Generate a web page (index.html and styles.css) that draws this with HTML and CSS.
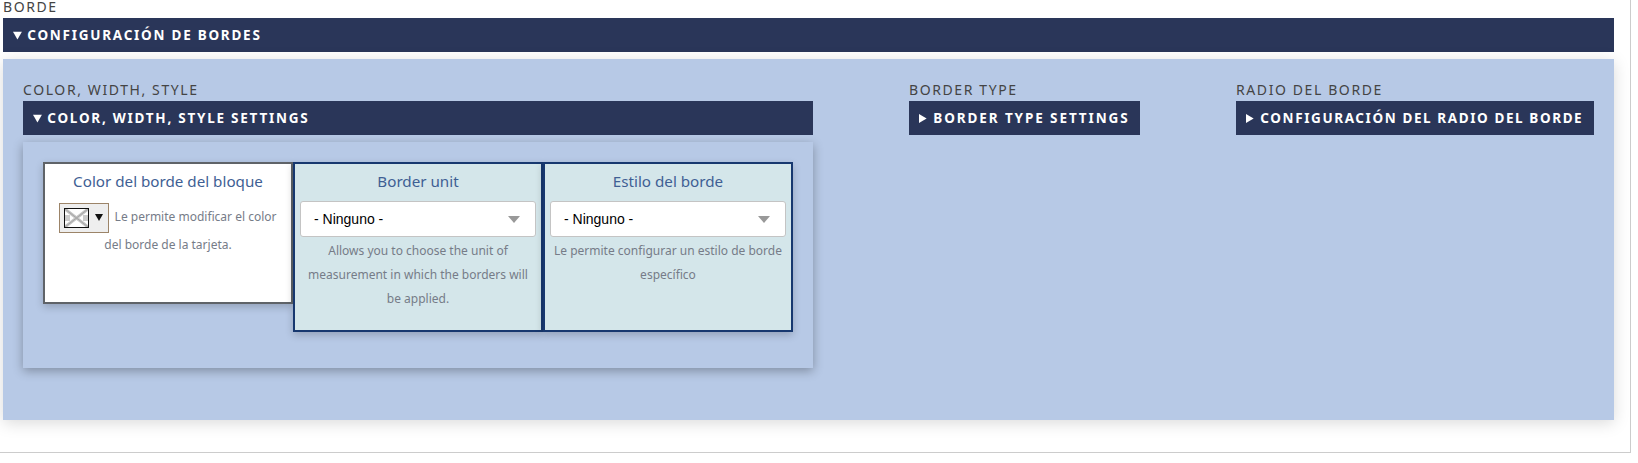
FILE: index.html
```html
<!DOCTYPE html>
<html lang="es">
<head>
    <meta charset="UTF-8">
    <meta name="viewport" content="width=device-width, initial-scale=1.0">
    <title>Borde</title>
    <link rel="stylesheet" href="styles.css">
</head>
<body>
    <div class="page-frame">
        <div class="field-label">Borde</div>
        <details class="group" open>
            <summary>Configuración de bordes</summary>
            <div class="group-panel">
                <div class="column column-color">
                    <div class="field-label">Color, width, style</div>
                    <details class="group" open>
                        <summary>Color, width, style settings</summary>
                        <div class="settings-panel">
                            <div class="card card-color">
                                <h4>Color del borde del bloque</h4>
                                <p>
                                    <span class="color-picker">
                                        <svg class="swatch" width="25" height="20" viewBox="0 0 25 20">
                                            <rect x="0" y="0" width="25" height="20" fill="#fff"/>
                                            <rect x="1" y="7" width="5" height="6" fill="#ccc"/>
                                            <rect x="19" y="7" width="5" height="6" fill="#ccc"/>
                                            <path d="M1 1L24 19M24 1L1 19" stroke="#c4c4c4" stroke-width="3"/>
                                            <path d="M1 1L24 19M24 1L1 19" stroke="#a6a6a6" stroke-width="1"/>
                                            <rect x="0.5" y="0.5" width="24" height="19" fill="none" stroke="#111"/>
                                        </svg>
                                        <span class="picker-arrow"></span>
                                    </span>
                                    Le permite modificar el color del borde de la tarjeta.
                                </p>
                            </div>
                            <div class="card">
                                <h4>Border unit</h4>
                                <div class="select-box">
                                    <select>
                                        <option>- Ninguno -</option>
                                    </select>
                                </div>
                                <p>Allows you to choose the unit of measurement in which the borders will be applied.</p>
                            </div>
                            <div class="card">
                                <h4>Estilo del borde</h4>
                                <div class="select-box">
                                    <select>
                                        <option>- Ninguno -</option>
                                    </select>
                                </div>
                                <p>Le permite configurar un estilo de borde específico</p>
                            </div>
                        </div>
                    </details>
                </div>
                <div class="column column-type">
                    <div class="field-label">Border type</div>
                    <details class="group">
                        <summary>Border type settings</summary>
                    </details>
                </div>
                <div class="column column-radius">
                    <div class="field-label">Radio del borde</div>
                    <details class="group">
                        <summary>Configuración del radio del borde</summary>
                    </details>
                </div>
            </div>
        </details>
    </div>
</body>
</html>
```
FILE: styles.css
```css
body {
    margin: 0;
    font-family: "Noto Sans", sans-serif;
    background-color: #fff;
}
.page-frame {
    box-sizing: border-box;
    width: 1631px;
    height: 453px;
    padding: 0 16px 0 3px;
    border-right: 1px solid #ccc;
    border-bottom: 1px solid #ccc;
}
.field-label {
    padding-bottom: 4px;
    font-size: 14px;
    line-height: 14px;
    letter-spacing: 1.6px;
    text-transform: uppercase;
    color: #444;
}
.group summary {
    box-sizing: border-box;
    height: 34px;
    padding-left: 10px;
    font-size: 13.5px;
    font-weight: 700;
    line-height: 34px;
    letter-spacing: 1.75px;
    text-transform: uppercase;
    color: #fff;
    background-color: #2a3659;
    cursor: pointer;
}
.group-panel {
    display: flex;
    margin-top: 7px;
    padding: 24px 20px 52px;
    background-color: #b7c9e6;
    box-shadow: 0 3px 15px rgba(0, 0, 0, 0.15);
}
.column-color {
    width: 790px;
}
.column-type {
    width: 231px;
    margin-left: 96px;
}
.column-type .group summary {
    letter-spacing: 1.9px;
}
.column-radius {
    width: 358px;
    margin-left: 96px;
}
.column-radius .group summary {
    letter-spacing: 1.6px;
}
.settings-panel {
    display: flex;
    align-items: stretch;
    margin-top: 7px;
    padding: 20px 20px 36px;
    background-color: #b7c9e6;
    box-shadow: 0 3px 10px rgba(0, 0, 0, 0.3);
}
.card {
    box-sizing: border-box;
    width: 250px;
    padding: 5px 5px 19px;
    border: 2px solid #17386f;
    background-color: #d4e6ea;
    box-shadow: 0 3px 8px rgba(0, 0, 0, 0.2);
    text-align: center;
}
.card h4 {
    margin: 0 0 8px;
    font-size: 15.2px;
    font-weight: 400;
    line-height: 24px;
    color: #3f5f94;
}
.card p {
    margin: 0;
    padding-top: 2px;
    font-size: 12px;
    line-height: 24px;
    color: #767c88;
}
.card-color {
    align-self: flex-start;
    height: 142px;
    border-color: #5f6368;
    background-color: #fff;
}
.color-picker {
    display: inline-flex;
    box-sizing: border-box;
    align-items: center;
    width: 50px;
    height: 30px;
    margin-right: 2px;
    padding-left: 4px;
    border: 1px solid #9c8468;
    background-color: #eee;
    vertical-align: middle;
}
.swatch {
    flex: none;
}
.picker-arrow {
    width: 0;
    height: 0;
    margin: -2px 0 0 6px;
    border-top: 7px solid #111;
    border-right: 4px solid transparent;
    border-left: 4px solid transparent;
}
.select-box {
    position: relative;
}
.select-box select {
    display: block;
    box-sizing: border-box;
    width: 100%;
    height: 36px;
    padding: 0 13px;
    border: 1px solid #c4c4c4;
    border-radius: 3px;
    font-family: "Liberation Sans", sans-serif;
    font-size: 14px;
    color: #000;
    background-color: #fff;
    appearance: none;
}
.select-box::after {
    content: "";
    position: absolute;
    top: 15px;
    right: 16px;
    border-top: 7px solid #999;
    border-right: 6px solid transparent;
    border-left: 6px solid transparent;
}
```
